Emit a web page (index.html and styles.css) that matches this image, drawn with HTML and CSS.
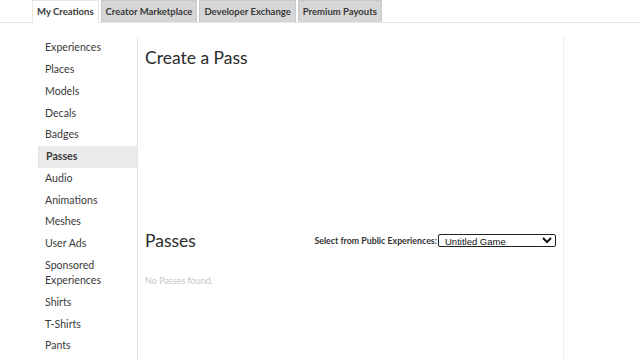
FILE: index.html
```html
<!DOCTYPE html>
<html lang="en">
<head>
  <meta charset="UTF-8" />
  <title>Create a Pass</title>
  <link rel="stylesheet" href="styles.css">
</head>
<body>
  <div class="tabs">
    <div class="tab active">My Creations</div>
    <div class="tab">Creator Marketplace</div>
    <div class="tab">Developer Exchange</div>
    <div class="tab">Premium Payouts</div>
  </div>

  <div class="main">
    <ul class="side">
      <li>Experiences</li>
      <li>Places</li>
      <li>Models</li>
      <li>Decals</li>
      <li>Badges</li>
      <li class="selected">Passes</li>
      <li>Audio</li>
      <li>Animations</li>
      <li>Meshes</li>
      <li>User Ads</li>
      <li>Sponsored Experiences</li>
      <li>Shirts</li>
      <li>T-Shirts</li>
      <li>Pants</li>
    </ul>

    <div class="content">
      <h1>Create a Pass</h1>
      <div class="create-area"></div>

      <div class="passes-head">
        <h1>Passes</h1>
        <label class="pick">Select from Public Experiences:
          <select>
            <option>Untitled Game</option>
          </select>
        </label>
      </div>
      <p class="empty">No Passes found.</p>
    </div>
  </div>
</body>
</html>
```

FILE: styles.css
```css
html, body {
  margin: 0;
  padding: 0;
  background: #fff;
  font-family: Lato, "Open Sans", sans-serif;
  color: #333;
}
.tabs {
  display: flex;
  gap: 2px;
  padding-left: 32px;
  height: 22px;
  border-bottom: 1px solid #e3e3e3;
}
.tab {
  padding: 0 4px;
  font-size: 9.5px;
  font-weight: 700;
  line-height: 22px;
  color: #393939;
  background: #d6d6d6;
  border: 1px solid #c8c8c8;
  border-bottom: none;
  box-sizing: border-box;
  height: 22px;
}
.tab.active {
  background: #fff;
  border-color: #e6e6e6;
  height: 23px;
}
.main {
  display: flex;
  padding-left: 38px;
  padding-top: 14px;
}
.side {
  list-style: none;
  margin: 0;
  padding: 0;
  width: 99px;
  border-right: 1px solid #e3e3e3;
  min-height: 330px;
}
.side li {
  font-size: 10.6px;
  line-height: 15px;
  padding: 3.2px 7px 3.6px;
  color: #3a3a3a;
}
.side li.selected {
  background: #ebebeb;
  font-weight: 700;
  border-left: 1px solid #e0e0e0;
}
.content {
  width: 411px;
  padding: 0 7px;
  border-right: 1px solid #ececec;
}
h1 {
  font-weight: 400;
  font-size: 17.5px;
  margin: 0;
  color: #2b2b2b;
}
.content > h1 {
  margin-top: 10px;
}
.create-area {
  height: 162px;
}
.passes-head {
  display: flex;
  align-items: center;
  justify-content: space-between;
}
.pick {
  font-size: 8.8px;
  font-weight: 700;
  color: #333;
  display: flex;
  align-items: center;
  gap: 1px;
}
.pick select {
  width: 118px;
  height: 13px;
  font-size: 9.5px;
  font-family: "Liberation Sans", Arial, sans-serif;
  padding: 0 2px;
  border: 1px solid #222;
  border-radius: 2px;
  background: #fff;
  color: #111;
}
.empty {
  margin: 24px 0 0;
  font-size: 9px;
  color: #c6c6c6;
}
```
